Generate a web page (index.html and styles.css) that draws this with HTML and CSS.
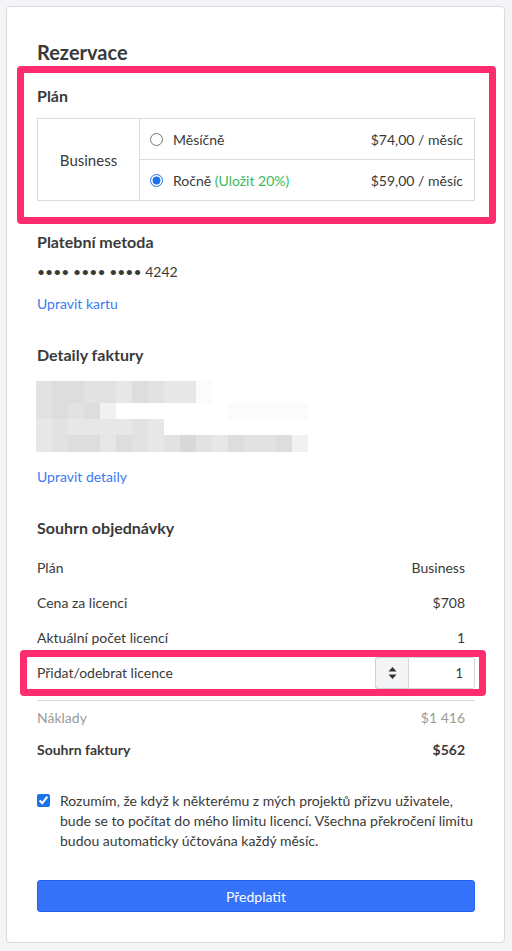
FILE: index.html
```html
<!DOCTYPE html>
<html lang="cs">
<head>
<meta charset="utf-8">
<title>Rezervace</title>
<link rel="stylesheet" href="styles.css">
</head>
<body>
<div class="card">
  <h1 class="title">Rezervace</h1>

  <h2 class="h2 first">Plán</h2>
  <div class="plan">
    <div class="plan-name">Business</div>
    <div class="plan-opts">
      <label class="opt">
        <input type="radio" name="period">
        <span class="opt-label">Měsíčně</span>
        <span class="opt-price">$74,00 / měsíc</span>
      </label>
      <label class="opt">
        <input type="radio" name="period" checked>
        <span class="opt-label">Ročně <span class="save">(Uložit 20%)</span></span>
        <span class="opt-price">$59,00 / měsíc</span>
      </label>
    </div>
  </div>

  <h2 class="h2">Platební metoda</h2>
  <div class="card-num">•••• •••• •••• 4242</div>
  <a class="link" href="#">Upravit kartu</a>

  <h2 class="h2">Detaily faktury</h2>
  <div class="blur">
    <div class="brow r1">
      <i class="c3"></i><i class="c2"></i><i class="c2"></i><i class="c3"></i><i class="c3"></i><i class="c4"></i><i class="c2"></i><i class="c3"></i><i class="c4"></i><i class="c4"></i><i class="c6"></i>
    </div>
    <div class="brow">
      <i class="c3"></i><i class="c2"></i><i class="c3"></i><i class="c2"></i><i class="c5"></i><i class="c7"></i><i class="c7"></i><i class="c7"></i><i class="c7"></i><i class="c7"></i><i class="c7"></i><i class="c7"></i><i class="c6"></i><i class="c6"></i><i class="c6"></i><i class="c6"></i><i class="c6"></i>
    </div>
    <div class="brow">
      <i class="c4"></i><i class="c3"></i><i class="c4"></i><i class="c4"></i><i class="c4"></i><i class="c4"></i><i class="c3"></i><i class="c4"></i>
    </div>
    <div class="brow">
      <i class="c4"></i><i class="c3"></i><i class="c2"></i><i class="c2"></i><i class="c4"></i><i class="c2"></i><i class="c3"></i><i class="c4"></i><i class="c3"></i><i class="c1"></i><i class="c3"></i><i class="c4"></i><i class="c2"></i><i class="c3"></i><i class="c3"></i><i class="c2"></i><i class="c5"></i>
    </div>
  </div>
  <a class="link link2" href="#">Upravit detaily</a>

  <h2 class="h2">Souhrn objednávky</h2>
  <div class="summary">
    <div class="srow"><span>Plán</span><span>Business</span></div>
    <div class="srow"><span>Cena za licenci</span><span>$708</span></div>
    <div class="srow"><span>Aktuální počet licencí</span><span>1</span></div>
    <div class="srow"><span>Přidat/odebrat licence</span>
      <div class="qty">
        <div class="stepper">
          <svg width="9" height="14" viewBox="0 0 9 14"><path d="M4.5 1 L8.5 5.5 H0.5 Z M4.5 13 L8.5 8.5 H0.5 Z" fill="#333"/></svg>
        </div>
        <div class="qty-val">1</div>
      </div>
    </div>
  </div>
  <div class="totals">
    <div class="trow muted"><span>Náklady</span><span>$1 416</span></div>
    <div class="trow bold"><span>Souhrn faktury</span><span>$562</span></div>
  </div>

  <label class="agree">
    <input type="checkbox" checked>
    <span>Rozumím, že když k některému z mých projektů přizvu uživatele, bude se to počítat do mého limitu licencí. Všechna překročení limitu budou automaticky účtována každý měsíc.</span>
  </label>

  <button class="btn" type="button">Předplatit</button>
</div>

<div class="hl hl-plan"></div>
<div class="hl hl-qty"></div>
</body>
</html>
```

FILE: styles.css
```css
* { box-sizing: border-box; }
html, body { margin: 0; padding: 0; }
body {
  background: #f3f4f6;
  font-family: Lato, "Open Sans", sans-serif;
  color: #3a3a3a;
  font-size: 14px;
  width: 512px;
  height: 951px;
  overflow: hidden;
  position: relative;
}
.card {
  margin: 6px 7px 0 6px;
  background: #fff;
  border: 1px solid #d9dade;
  border-radius: 4px;
  padding: 33px 29px 30px 30px;
  display: flex;
  flex-direction: column;
}
.title {
  margin: 0;
  font-size: 20px;
  line-height: 24px;
  font-weight: 700;
  color: #3a3a3a;
}
.h2 {
  margin: 31px 0 0;
  font-size: 16px;
  line-height: 20px;
  font-weight: 700;
  color: #3a3a3a;
}
.h2.first { margin-top: 22px; }

.plan {
  margin-top: 12px;
  display: flex;
  border: 1px solid #dcdcdc;
  height: 83px;
}
.plan-name {
  width: 102px;
  border-right: 1px solid #dcdcdc;
  display: flex;
  align-items: center;
  justify-content: center;
  font-size: 15px;
  color: #3a3a3a;
}
.plan-opts { flex: 1; display: flex; flex-direction: column; }
.opt {
  flex: 1;
  display: flex;
  align-items: center;
  padding: 0 11px 0 10px;
}
.opt + .opt { border-top: 1px solid #dcdcdc; }
.opt input {
  margin: 0 10px 0 0;
  width: 13px;
  height: 13px;
  accent-color: #1a73e8;
}
.opt-label { flex: 1; }
.save { color: #3cb95a; }
.opt-price { text-align: right; }

.card-num { margin-top: 10px; line-height: 20px; }
.link {
  margin-top: 12px;
  line-height: 20px;
  color: #3b7bf2;
  text-decoration: none;
  align-self: flex-start;
}
.link2 { margin-top: 15px; }

.blur { margin-top: 16px; display: flex; flex-direction: column; margin-left: -1px; }
.brow { display: flex; height: 16px; }
.brow.r1 { height: 22px; }
.brow:last-child { height: 17px; }
.brow i { width: 16px; height: 100%; display: block; }
.c1 { background: #d8d8d8; }
.c2 { background: #dddddd; }
.c3 { background: #e2e2e2; }
.c4 { background: #e7e7e7; }
.c5 { background: #f1f1f1; }
.c6 { background: #fbfbfb; }
.c7 { background: #ffffff; }

.summary { margin-top: 12px; display: flex; flex-direction: column; }
.srow {
  height: 35px;
  display: flex;
  align-items: center;
  justify-content: space-between;
  padding-right: 10px;
}
.srow:last-child { padding-right: 0; }
.qty { display: flex; height: 32px; }
.stepper {
  width: 33px;
  background: #f3f4f6;
  border: 1px solid #cfd1d5;
  border-right: none;
  border-radius: 3px 0 0 3px;
  display: flex;
  align-items: center;
  justify-content: center;
}
.qty-val {
  width: 67px;
  border: 1px solid #d4d6da;
  border-radius: 0 3px 3px 0;
  display: flex;
  align-items: center;
  justify-content: flex-end;
  padding-right: 11px;
  font-size: 13px;
}
.totals {
  margin-top: 10px;
  border-top: 1px solid #dcdcdc;
  display: flex;
  flex-direction: column;
}
.trow {
  height: 32px;
  display: flex;
  align-items: center;
  justify-content: space-between;
  padding-right: 10px;
}
.trow.muted { color: #9a9a9a; }
.trow.bold { font-weight: 700; color: #3a3a3a; }

.agree {
  margin-top: 26px;
  display: flex;
  align-items: flex-start;
  line-height: 20px;
}
.agree input {
  margin: 3px 10px 0 0;
  width: 13px;
  height: 13px;
  flex: none;
  accent-color: #1a73e8;
}
.btn {
  margin-top: 29px;
  height: 32px;
  background: #3574fa;
  border: 1px solid #1f62ef;
  border-radius: 3px;
  color: #fff;
  font-family: Lato, "Open Sans", sans-serif;
  font-size: 14px;
}

.hl {
  position: absolute;
  border: 7px solid #ff2d6d;
  border-radius: 4px;
  pointer-events: none;
}
.hl-plan { left: 17px; top: 66px; width: 479px; height: 158px; }
.hl-qty { left: 20px; top: 650px; width: 466px; height: 46px; }
```
